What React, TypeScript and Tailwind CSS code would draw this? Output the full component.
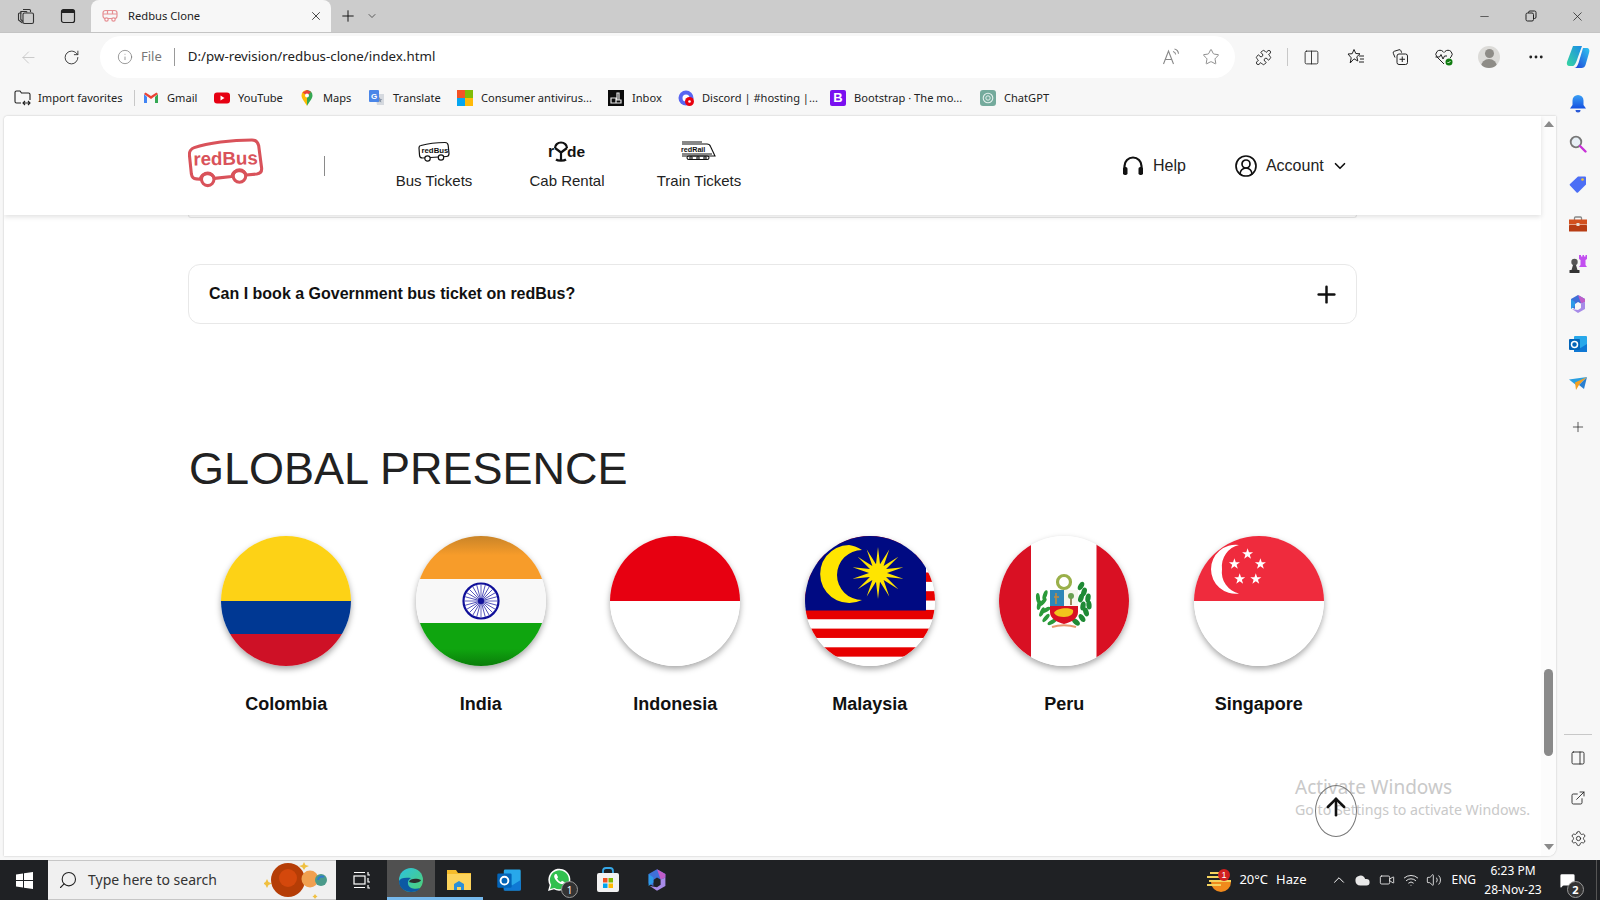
import {
  ArrowLeft, RotateCw, Info, Star, Puzzle, Columns2, Plus, ChevronDown, X, Minus, Ellipsis, Settings, ExternalLink,
  PanelRight, ChevronUp, Search, CircleUserRound, ArrowUp, Volume2, MessageSquare, Wifi, Video, Cloud,
} from 'lucide-react';
import type { ReactNode } from 'react';

const BOOKMARKS: { label: string; width: string; icon: ReactNode }[] = [
  { label: 'Gmail', width: 'w-[71px]', icon: <GmailIcon /> },
  { label: 'YouTube', width: 'w-[85px]', icon: <YoutubeIcon /> },
  { label: 'Maps', width: 'w-[70px]', icon: <MapsIcon /> },
  { label: 'Translate', width: 'w-[88px]', icon: <TranslateIcon /> },
  { label: 'Consumer antivirus...', width: 'w-[151px]', icon: <MsIcon /> },
  { label: 'Inbox', width: 'w-[70px]', icon: <InboxIcon /> },
  { label: 'Discord | #hosting |...', width: 'w-[152px]', icon: <DiscordIcon /> },
  { label: 'Bootstrap · The mo...', width: 'w-[150px]', icon: <BootstrapIcon /> },
  { label: 'ChatGPT', width: 'w-[80px]', icon: <ChatIcon /> },
];

const COUNTRIES: { name: string; flag: ReactNode }[] = [
  { name: 'Colombia', flag: <Colombia /> },
  { name: 'India', flag: <India /> },
  { name: 'Indonesia', flag: <Indonesia /> },
  { name: 'Malaysia', flag: <Malaysia /> },
  { name: 'Peru', flag: <Peru /> },
  { name: 'Singapore', flag: <Singapore /> },
];

function GmailIcon() {
  return (
    <svg width="16" height="16" viewBox="0 0 16 16">
      <path d="M1 4v9h3V7z" fill="#4285f4" />
      <path d="M15 4v9h-3V7z" fill="#34a853" />
      <path d="M1 4l7 5 7-5-1.500-1.500L8 6 2.500 2.500z" fill="#ea4335" />
    </svg>
  );
}
function YoutubeIcon() {
  return (
    <svg width="16" height="16" viewBox="0 0 16 16">
      <rect x="0" y="2.500" width="16" height="11" rx="3" fill="#e60012" />
      <path d="M6.500 5.500l4 2.500-4 2.500z" fill="#fff" />
    </svg>
  );
}
function MapsIcon() {
  return (
    <svg width="16" height="16" viewBox="0 0 16 16">
      <path d="M8 0a5.500 5.500 0 0 0-5.500 5.500C2.500 9 6 12 8 16z" fill="#fbbc04" />
      <path d="M8 0a5.500 5.500 0 0 1 5.500 5.500C13.500 9 10 12 8 16V8z" fill="#34a853" />
      <path d="M3.500 2.500L8 0l4 2-4 3.500z" fill="#ea4335" />
      <circle cx="8" cy="5.500" r="2" fill="#fff" />
    </svg>
  );
}
function TranslateIcon() {
  return (
    <svg width="16" height="16" viewBox="0 0 16 16">
      <path d="M6 4h9v11H8z" fill="#d5d9df" />
      <path d="M10.500 7l.9 2 2 .2-1.500 1.300.5 2-1.900-1.100-1.800 1.100.5-2-1.500-1.300 2-.2z" fill="#8a96a8" />
      <rect x="0" y="0" width="10" height="12" rx="1" fill="#4a86e8" />
      <text x="5" y="9" textAnchor="middle" fontSize="8" fontWeight="700" fill="#fff" fontFamily="Liberation Sans">G</text>
    </svg>
  );
}
function MsIcon() {
  return (
    <div className="grid h-4 w-4 grid-cols-2 grid-rows-2">
      <div className="bg-[#f35325]" />
      <div className="bg-[#81bc06]" />
      <div className="bg-[#05a6f0]" />
      <div className="bg-[#ffba08]" />
    </div>
  );
}
function InboxIcon() {
  return (
    <svg width="16" height="16" viewBox="0 0 16 16">
      <rect width="16" height="16" fill="#0b0b0b" />
      <path d="M3 8h5v5H3zM8 10h5v3H8zM9 3h2v7H9z" fill="none" stroke="#e8e8e8" strokeWidth="1.200" />
    </svg>
  );
}
function DiscordIcon() {
  return (
    <svg width="16" height="16" viewBox="0 0 16 16">
      <circle cx="8" cy="8" r="7.500" fill="#5865f2" />
      <circle cx="8" cy="8" r="3.500" fill="#fff" />
      <circle cx="11.500" cy="11.500" r="4.500" fill="#e8000f" />
      <circle cx="11.500" cy="11.500" r="1.300" fill="#fff" />
    </svg>
  );
}
function BootstrapIcon() {
  return (
    <div className="flex h-4 w-4 items-center justify-center rounded-[2px] bg-[#7a10f0] font-['Liberation_Sans',sans-serif] text-[13px] leading-none font-bold text-white">
      B
    </div>
  );
}
function ChatIcon() {
  return (
    <svg width="16" height="16" viewBox="0 0 16 16">
      <rect width="16" height="16" rx="3" fill="#74aa9c" />
      <circle cx="8" cy="8" r="4.800" fill="none" stroke="#e4f0ed" strokeWidth="1.100" />
      <circle cx="8" cy="8" r="2.200" fill="none" stroke="#e4f0ed" strokeWidth="1" />
    </svg>
  );
}

function BusFavicon() {
  return (
    <svg width="16" height="14" viewBox="0 0 16 14" fill="none" stroke="#e58f93" strokeWidth="1.200">
      <rect x="1" y="1.500" width="14" height="8" rx="2.500" />
      <path d="M1 5h14M5.500 1.500v4M10.500 1.500v4" />
      <circle cx="4.500" cy="10.500" r="1.700" fill="#fff" />
      <circle cx="11.500" cy="10.500" r="1.700" fill="#fff" />
    </svg>
  );
}

function WorkspacesIcon() {
  return (
    <svg width="18" height="18" viewBox="0 0 18 18" fill="none" stroke="#333" strokeWidth="1.100">
      <path d="M6 2.500h6.500a1 1 0 0 1 1 1V5M3.500 4.500H9a1 1 0 0 1 1 .8" />
      <path d="M1.500 7a1 1 0 0 1 1-1h2" />
      <rect x="6" y="6" width="10.500" height="10.500" rx="1.500" />
      <path d="M1.500 7v6l4 3M3.800 4.500v8l2.200 2" />
    </svg>
  );
}
function TabActionsIcon() {
  return (
    <svg width="16" height="16" viewBox="0 0 16 16">
      <rect x="1.500" y="1.500" width="13" height="13" rx="2" fill="none" stroke="#222" strokeWidth="1.200" />
      <path d="M1.500 3.500a2 2 0 0 1 2-2h9a2 2 0 0 1 2 2V5h-13z" fill="#222" />
    </svg>
  );
}
function RestoreIcon() {
  return (
    <svg width="12" height="12" viewBox="0 0 12 12" fill="none" stroke="#222" strokeWidth="1">
      <rect x="1" y="3" width="7.500" height="8" rx="1.500" />
      <path d="M3.500 3V2.500A1.500 1.500 0 0 1 5 1h4.500A1.500 1.500 0 0 1 11 2.500V7a1.500 1.500 0 0 1-1.500 1.500h-1" />
    </svg>
  );
}
function ReadAloudIcon() {
  return (
    <svg width="18" height="18" viewBox="0 0 18 18" fill="none" stroke="#888" strokeWidth="1.100">
      <path d="M1.500 16L6.500 3l5 13M3.300 11.500h6.400" />
      <path d="M11 3.500c1.500.3 2.500 1.500 2.700 3M12.500 1c2.300.5 3.800 2.300 4 4.700" />
    </svg>
  );
}
function FavoritesIcon() {
  return (
    <svg width="18" height="18" viewBox="0 0 18 18" fill="none" stroke="#222" strokeWidth="1">
      <path d="M7 1.500l1.800 4 4.200.3-3.200 3 1 4.200L7 10.800 3.200 15l1-5.200L1 6l4.200-.3z" />
      <path d="M12 8h5M13 11h4M12 14h5" />
    </svg>
  );
}
function CollectionsIcon() {
  return (
    <svg width="18" height="18" viewBox="0 0 18 18" fill="none" stroke="#222" strokeWidth="1">
      <path d="M4 9.500L2.300 5.300a1.500 1.500 0 0 1 .9-2L8 1.800a1.500 1.500 0 0 1 1.900.9l.7 2" />
      <rect x="6" y="6" width="10.500" height="10.500" rx="2" />
      <path d="M11.250 8.500v5.500M8.500 11.250H14" />
    </svg>
  );
}
function HeartBeatIcon() {
  return (
    <svg width="20" height="20" viewBox="0 0 20 20" fill="none" stroke="#222" strokeWidth="1">
      <path d="M10 17l-7-7a4 4 0 0 1 0-5.500 4.200 4.200 0 0 1 6 0l1 1 1-1a4.200 4.200 0 0 1 6 0 4 4 0 0 1 0 5.500l-1 1" />
      <path d="M1.500 10h4l1.500-2.500 2 4.500 1.500-3h2.500" />
      <circle cx="15" cy="15" r="3.500" fill="#107c10" stroke="none" />
      <path d="M13.500 15l1 1 2-2" stroke="#fff" strokeWidth="0.900" />
    </svg>
  );
}
function CopilotIcon() {
  return (
    <svg width="24" height="24" viewBox="0 0 24 24">
      <defs>
        <linearGradient id="cop-a" x1="0" y1="1" x2="1" y2="0">
          <stop offset="0" stopColor="#37d6a0" />
          <stop offset="1" stopColor="#1a8be8" />
        </linearGradient>
        <linearGradient id="cop-b" x1="0" y1="1" x2="1" y2="0">
          <stop offset="0" stopColor="#1f3fd8" />
          <stop offset="1" stopColor="#2fc6f0" />
        </linearGradient>
      </defs>
      <path d="M7 1h9l-4 11c-1 3-3 9-5 9H3.500C1 21 .5 19 1 17z" fill="url(#cop-a)" />
      <path d="M17 3h3.500C23 3 24 5 23 8l-3.500 12c-.6 2-2 3-4 3H8c2 0 3.500-2 4.500-5z" fill="url(#cop-b)" />
    </svg>
  );
}
function ChessIcon() {
  return (
    <svg width="20" height="20" viewBox="0 0 20 20">
      <circle cx="6.500" cy="8" r="3.200" fill="#555" />
      <path d="M5 11h3l1.500 5h-6z" fill="#444" />
      <rect x="1.500" y="16" width="10" height="3" rx="0.500" fill="#333" />
      <path d="M11 1h2v1.500h1.500V1h1.500v1.500h1.500V1H19v4l-1.500 1v5l1.500 2H11l1.500-2V6L11 5z" fill="#c24ff0" />
    </svg>
  );
}
function M365Icon({ size = 20 }: { size?: number }) {
  return (
    <svg width={size} height={size} viewBox="0 0 20 20">
      <path d="M10 1l7 4v3l-4 1.500-3-1.500-3 2v5l-4-2V5z" fill="#3f6fd8" />
      <path d="M10 1l7 4v3l-4 1.500z" fill="#c05cc9" />
      <path d="M17 8v7l-7 4-6-4 6 1 3-2V9.500z" fill="#a78be8" />
      <path d="M3 15V5l4 3v4z" fill="#2c9ae8" />
    </svg>
  );
}
function OutlookIcon({ size = 20 }: { size?: number }) {
  return (
    <svg width={size} height={size} viewBox="0 0 20 20">
      <rect x="6" y="2" width="13" height="16" rx="1" fill="#28a8ea" />
      <path d="M6 10l6.500 4L19 10v8H6z" fill="#0f78d4" />
      <rect x="1" y="5" width="11" height="11" rx="1" fill="#0364b8" />
      <circle cx="6.500" cy="10.500" r="3" fill="none" stroke="#fff" strokeWidth="1.500" />
    </svg>
  );
}
function PlaneIcon() {
  return (
    <svg width="20" height="16" viewBox="0 0 20 16">
      <path d="M1 3.500L19 1 8 9z" fill="#2a9fe0" />
      <path d="M19 1L7 6.500 8 14l3-5z" fill="#f4a020" />
      <path d="M11 9l5 4 3-12z" fill="#2a7fd0" />
    </svg>
  );
}
function SidebarTag() {
  return (
    <svg width="18" height="18" viewBox="0 0 18 18">
      <path d="M9 1.500h7a1 1 0 0 1 1 1v7L9 17.500a1 1 0 0 1-1.400 0L1 10.500a1 1 0 0 1 0-1.400z" fill="#4c6ef5" />
      <circle cx="13.500" cy="4.500" r="1.300" fill="#f4c430" />
    </svg>
  );
}
function ToolboxIcon() {
  return (
    <svg width="20" height="16" viewBox="0 0 20 16">
      <path d="M6.500 4V2a1 1 0 0 1 1-1h5a1 1 0 0 1 1 1v2" fill="none" stroke="#888" strokeWidth="1.300" />
      <rect x="1" y="3.500" width="18" height="5" fill="#d2501e" />
      <rect x="1" y="9" width="18" height="6.500" rx="0.500" fill="#b83d14" />
      <rect x="8.500" y="7" width="3" height="3" fill="#e8e0d8" />
    </svg>
  );
}
function BellIcon() {
  return (
    <svg width="16" height="18" viewBox="0 0 16 18">
      <defs>
        <linearGradient id="bell-a" x1="0" y1="0" x2="0" y2="1">
          <stop offset="0" stopColor="#3aa0f5" />
          <stop offset="1" stopColor="#1550e0" />
        </linearGradient>
      </defs>
      <path d="M8 0a5.500 5.500 0 0 0-5.500 5.500V10L0 13.500h16L13.500 10V5.500A5.500 5.500 0 0 0 8 0z" fill="url(#bell-a)" />
      <path d="M5.500 15h5a2.500 2.500 0 0 1-5 0z" fill="#2a5ad8" />
    </svg>
  );
}
function SidebarSearchIcon() {
  return (
    <svg width="18" height="18" viewBox="0 0 18 18">
      <circle cx="7" cy="7" r="5.300" fill="#e8f0f6" stroke="#777" strokeWidth="1.800" />
      <path d="M11 11l5.500 5.500" stroke="#c832d8" strokeWidth="2.400" strokeLinecap="round" />
    </svg>
  );
}

function RedbusLogo() {
  return (
    <svg width="76" height="50" viewBox="0 0 78 52" fill="none">
      <path
        d="M6 10C20 5 45 2 66 2c4 0 6 2 7 6l3 23c.5 4-1 6-5 6.500L60 38.500a8 8 0 0 0-15 1.500L27 42a8 8 0 0 0-15 1l-4-.5c-3 0-4.500-2-5-5L1 18c-.5-4 2-7 5-8z"
        stroke="#d9525a"
        strokeWidth="3.200"
        strokeLinejoin="round"
      />
      <circle cx="20" cy="43" r="6.500" stroke="#d9525a" strokeWidth="3.200" />
      <circle cx="53" cy="39.500" r="6.500" stroke="#d9525a" strokeWidth="3.200" />
      <text x="5" y="28" fontSize="19.500" fontWeight="700" fill="#d9525a" fontFamily="Liberation Sans" transform="rotate(-1 38 22)">
        redBus
      </text>
    </svg>
  );
}
function NavBusIcon() {
  return (
    <svg width="32" height="22" viewBox="0 0 32 22" fill="none" stroke="#111">
      <path d="M3 4.500C10 2.500 20 1.500 27 1.500c2 0 3 1 3.200 3l.8 8c0 2-.8 3-2.500 3l-24 1.500c-2 0-3-1-3-3L1 7c0-1.500 1-2.500 2-2.500z" strokeWidth="1.200" />
      <circle cx="9.500" cy="17.500" r="2.700" fill="#fff" strokeWidth="1.200" />
      <circle cx="23" cy="16.500" r="2.700" fill="#fff" strokeWidth="1.200" />
      <text x="3.500" y="11.500" fontSize="7.800" fontWeight="700" fill="#111" stroke="none" fontFamily="Liberation Sans">
        redBus
      </text>
    </svg>
  );
}
function NavRydeIcon() {
  return (
    <svg width="38" height="22" viewBox="0 0 38 22" fill="none">
      <text x="0" y="16" fontSize="16" fontWeight="700" fill="#111" fontFamily="Liberation Sans">r</text>
      <path d="M7 7a6 5.500 0 0 1 12 0" stroke="#111" strokeWidth="2.200" />
      <path d="M7 7l6 4.500 6-4.500M13 11.500V19" stroke="#111" strokeWidth="2.200" />
      <path d="M8 18.500c2 1.500 8 1.500 10 0" stroke="#111" strokeWidth="2.200" />
      <text x="19" y="16" fontSize="15.500" fontWeight="700" fill="#111" fontFamily="Liberation Sans">de</text>
    </svg>
  );
}
function NavRailIcon() {
  return (
    <svg width="36" height="22" viewBox="0 0 36 22" fill="none" stroke="#111" strokeWidth="1.100">
      <path d="M1 3h25c2 0 3 1 3.500 2.500L34 15H1" />
      <path d="M1 1h20M1 13h30" />
      <rect x="6" y="15" width="22" height="3.500" rx="1.700" />
      <circle cx="10" cy="17" r="1.200" />
      <circle cx="17" cy="17" r="1.200" />
      <circle cx="24" cy="17" r="1.200" />
      <text x="0" y="10.500" fontSize="7.200" fontWeight="700" fill="#111" stroke="none" fontFamily="Liberation Sans">
        redRail
      </text>
    </svg>
  );
}
function HeadsetIcon() {
  return (
    <svg width="22" height="20" viewBox="0 0 22 20" fill="none">
      <path d="M2.500 13V10a8.500 8.500 0 0 1 17 0v3" stroke="#111" strokeWidth="2.200" />
      <rect x="1" y="11" width="4.500" height="8" rx="1.800" fill="#111" />
      <rect x="16.500" y="11" width="4.500" height="8" rx="1.800" fill="#111" />
    </svg>
  );
}

function Colombia() {
  return (
    <svg width="130" height="130" viewBox="0 0 130 130">
      <rect width="130" height="65" fill="#fdd216" />
      <rect y="65" width="130" height="33" fill="#003893" />
      <rect y="98" width="130" height="32" fill="#ce1126" />
    </svg>
  );
}
function India() {
  const spokes = Array.from({ length: 24 }, (_, i) => (i * 360) / 24);
  return (
    <svg width="130" height="130" viewBox="0 0 130 130">
      <defs>
        <linearGradient id="in-top" x1="0" y1="0" x2="0" y2="1">
          <stop offset="0" stopColor="#c98428" />
          <stop offset="0.45" stopColor="#f79c2a" />
        </linearGradient>
        <linearGradient id="in-bot" x1="0" y1="0" x2="0" y2="1">
          <stop offset="0.6" stopColor="#0fa50f" />
          <stop offset="1" stopColor="#0a7d0a" />
        </linearGradient>
      </defs>
      <rect width="130" height="43" fill="url(#in-top)" />
      <rect y="43" width="130" height="44" fill="#f8f8f8" />
      <rect y="87" width="130" height="43" fill="url(#in-bot)" />
      <circle cx="65" cy="65" r="17.500" fill="#fff" stroke="#10109a" strokeWidth="2.200" />
      {spokes.map((a) => (
        <line key={a} x1="65" y1="65" x2="65" y2="48.500" stroke="#3a3ab0" strokeWidth="0.800" transform={`rotate(${a} 65 65)`} />
      ))}
      <circle cx="65" cy="65" r="3" fill="#10109a" />
    </svg>
  );
}
function Indonesia() {
  return (
    <svg width="130" height="130" viewBox="0 0 130 130">
      <rect width="130" height="65" fill="#e70011" />
      <rect y="65" width="130" height="65" fill="#fff" />
    </svg>
  );
}
function starPoints(cx: number, cy: number, outer: number, inner: number, n: number) {
  const pts: string[] = [];
  for (let i = 0; i < n * 2; i++) {
    const r = i % 2 === 0 ? outer : inner;
    const a = (Math.PI * i) / n - Math.PI / 2;
    pts.push(`${(cx + r * Math.cos(a)).toFixed(2)},${(cy + r * Math.sin(a)).toFixed(2)}`);
  }
  return pts.join(' ');
}
function Malaysia() {
  const stripes = Array.from({ length: 7 }, (_, i) => 130 - 9.35 * (2 * i + 2));
  return (
    <svg width="130" height="130" viewBox="0 0 130 130">
      <rect width="130" height="130" fill="#fff" />
      {stripes.map((y) => (
        <rect key={y} y={y} width="130" height="9.350" fill="#e70000" />
      ))}
      <rect width="121" height="74.500" fill="#000a82" />
      <path fillRule="evenodd" d="M44 9a29 29 0 1 0 13 55 25 25 0 1 1 0-50A29 29 0 0 0 44 9z" fill="#ffe500" />
      <polygon points={starPoints(73, 37, 26, 9, 14)} fill="#ffe500" />
    </svg>
  );
}
function Peru() {
  const leftLeaves: [number, number, number][] = [
    [53, 86, 60], [47, 82, 40], [43, 76, 25], [40, 69, 10], [39, 62, -5], [47, 74, 60], [44, 66, 40], [46, 59, 20],
  ];
  const rightLeaves: [number, number, number][] = [
    [77, 86, -50], [83, 82, -35], [87, 76, -20], [90, 69, -5], [89, 62, 10], [85, 56, 20], [82, 50, 30], [84, 70, 10], [82, 62, 20],
  ];
  return (
    <svg width="130" height="130" viewBox="0 0 130 130">
      <rect width="130" height="130" fill="#fff" />
      <rect width="32" height="130" fill="#d91023" />
      <rect x="97.500" width="32.500" height="130" fill="#d91023" />
      <circle cx="65" cy="46" r="6.500" fill="#fff" stroke="#9ab04a" strokeWidth="3.200" />
      {leftLeaves.map(([x, y, r]) => (
        <ellipse key={`${x}-${y}`} cx={x} cy={y} rx="2" ry="5" fill="#2a9a3a" transform={`rotate(${r} ${x} ${y})`} />
      ))}
      {rightLeaves.map(([x, y, r]) => (
        <ellipse key={`${x}-${y}`} cx={x} cy={y} rx="2.600" ry="4.500" fill="#1f8a35" transform={`rotate(${r} ${x} ${y})`} />
      ))}
      <path d="M51 54h14v16H51z" fill="#2f86b8" />
      <path d="M65 54h14v16H65z" fill="#f6f6ee" />
      <path d="M57 57v11M55 61h5" stroke="#c88a3a" strokeWidth="1.500" />
      <path d="M72 58v11" stroke="#7a6a30" strokeWidth="1.500" />
      <circle cx="72" cy="60" r="3" fill="#6aa050" />
      <path d="M51 70h28v6c0 7-7 10-14 12-7-2-14-5-14-12z" fill="#d91023" />
      <path d="M55 77c2-5 15-6 19-3 1 4-3 7-9 7-4 0-8-1-10-4z" fill="#f2c41c" />
      <path d="M53 91c7-2.500 17-2.500 24 0" stroke="#e89a70" strokeWidth="2" fill="none" />
    </svg>
  );
}
function Singapore() {
  const stars: [number, number][] = [
    [53.6, 18],
    [40.4, 28],
    [66.4, 28],
    [45.7, 43],
    [61.8, 43],
  ];
  return (
    <svg width="130" height="130" viewBox="0 0 130 130">
      <rect width="130" height="65" fill="#ef2b3d" />
      <rect y="65" width="130" height="65" fill="#fff" />
      <path d="M45 9a24.500 24.500 0 1 0 0 48.500A22 22 0 0 1 28 33 22 22 0 0 1 45 9z" fill="#fff" />
      {stars.map(([x, y]) => (
        <polygon key={x} points={starPoints(x, y, 5.8, 2.3, 5)} fill="#fff" />
      ))}
    </svg>
  );
}

function EdgeIcon() {
  return (
    <svg width="26" height="26" viewBox="0 0 26 26">
      <defs>
        <linearGradient id="edge-a" x1="0" y1="0" x2="1" y2="1">
          <stop offset="0" stopColor="#2cc3e0" />
          <stop offset="1" stopColor="#50d070" />
        </linearGradient>
      </defs>
      <circle cx="13" cy="13" r="12" fill="url(#edge-a)" />
      <path d="M1 14c0 7 6 11 12 11 4 0 7-1 9-4-4 1.500-11 1-12-4-.6-3 1-5 3-6-6-1-11 0-12 3z" fill="#0c59a4" />
      <path d="M11 15c1-4 8-4 12-2-.5 2-4 3-7 3-3 0-4-1-5-1z" fill="#2d2d2d" />
    </svg>
  );
}
function ExplorerIcon() {
  return (
    <svg width="26" height="24" viewBox="0 0 26 24">
      <path d="M1 2h9l2 3h13v17H1z" fill="#f5bc2c" />
      <rect x="1" y="6" width="24" height="16" fill="#fcd35c" />
      <path d="M8 22v-6l5-3 5 3v6h-3v-3h-4v3z" fill="#2a8fd8" />
    </svg>
  );
}
function WhatsappIcon() {
  return (
    <svg width="26" height="26" viewBox="0 0 26 26">
      <path d="M2 24l1.700-6A11 11 0 1 1 8 22.300z" fill="#fff" />
      <path d="M4 22l1.200-4.300A9.500 9.500 0 1 1 8.500 21z" fill="#31c04f" />
      <path d="M9.500 7c-1 .5-1.800 2-1 4 1 2.500 3.500 5 6.500 6 2 .5 3.500-.5 3.800-1.800l-2.800-1.500-1.200 1.300c-1.500-.5-3-2-3.700-3.500l1-1.300L10.500 7z" fill="#fff" />
    </svg>
  );
}
function StoreIcon() {
  return (
    <svg width="24" height="26" viewBox="0 0 24 26">
      <path d="M7 7V4a3 3 0 0 1 3-3h4a3 3 0 0 1 3 3v3" fill="none" stroke="#36a8e8" strokeWidth="1.800" />
      <rect x="1" y="6" width="22" height="19" rx="2" fill="#f2f2f2" />
      <rect x="7" y="11" width="4.500" height="4.500" fill="#f25022" />
      <rect x="12.500" y="11" width="4.500" height="4.500" fill="#7fba00" />
      <rect x="7" y="16.500" width="4.500" height="4.500" fill="#00a4ef" />
      <rect x="12.500" y="16.500" width="4.500" height="4.500" fill="#ffb900" />
    </svg>
  );
}
function Planets() {
  return (
    <svg width="72" height="38" viewBox="0 0 72 38">
      <path d="M3 6l1.500 3L8 10.500 4.500 12 3 15l-1.500-3L-1 10.500 1.500 9z" fill="#f0c040" transform="translate(0 12)" />
      <path d="M40 1l1.500 3L45 5l-3.500 1.500L40 9l-1.500-2.500L35 5l3.500-1z" fill="#f0c040" />
      <circle cx="24" cy="19" r="17" fill="#b53d06" />
      <circle cx="24" cy="17" r="9" fill="#d4480c" />
      <circle cx="46" cy="18" r="8.500" fill="#f0a050" />
      <circle cx="57" cy="19" r="6" fill="#4a9a8a" />
      <path d="M54 19a4 4 0 0 1 6-3" stroke="#2f7ad0" strokeWidth="2" fill="none" />
      <path d="M51 33l1 1.500 1.500 1-1.500 1-1 1.500-1-1.500-1.500-1 1.500-1z" fill="#f0c040" />
    </svg>
  );
}
function WeatherIcon() {
  return (
    <svg width="26" height="24" viewBox="0 0 26 24">
      <path d="M5 14a10 10 0 0 0 20 0z" fill="#f08a1c" />
      <path d="M4 5h11M1 9h15M3 13h22M1 17h14" stroke="#f4d35e" strokeWidth="2" />
      <circle cx="18" cy="7" r="6" fill="#d02020" />
      <text x="18" y="10" textAnchor="middle" fontSize="9" fill="#fff" fontFamily="Liberation Sans">1</text>
    </svg>
  );
}
function TaskViewIcon() {
  return (
    <svg width="18" height="18" viewBox="0 0 18 18" fill="none" stroke="#fff" strokeWidth="1.200">
      <rect x="1" y="5" width="11" height="8" />
      <path d="M1 1.500h11M1 16.500h11M15 1v3h2M15 7v4h2M15 14v3h2" />
    </svg>
  );
}

function ToolbarSlot({ className, children }: { className: string; children: ReactNode }) {
  return <div className={`flex shrink-0 items-center justify-center ${className}`}>{children}</div>;
}

export default function App() {
  return (
    <div className="relative flex h-[900px] w-[1600px] flex-col overflow-hidden bg-[#f7f7f7] font-['Liberation_Sans',sans-serif]">
      {/* tab strip */}
      <div className="flex h-8 shrink-0 items-center bg-[#cccccc] font-['Noto_Sans',sans-serif]">
        <ToolbarSlot className="ml-[8px] w-9"><WorkspacesIcon /></ToolbarSlot>
        <ToolbarSlot className="ml-[6px] w-9"><TabActionsIcon /></ToolbarSlot>
        <div className="ml-[5px] flex h-8 w-[240px] items-center rounded-t-lg bg-[#f7f7f7] pr-[8px] pl-[11px]">
          <BusFavicon />
          <span className="ml-[10px] flex-1 text-[11.2px] text-[#222]">Redbus Clone</span>
          <X size={14} strokeWidth={1.4} className="text-[#222]" />
        </div>
        <ToolbarSlot className="ml-[6px] w-[22px]"><Plus size={18} strokeWidth={1.3} className="text-[#111]" /></ToolbarSlot>
        <ToolbarSlot className="ml-[4px] w-[18px]"><ChevronDown size={12} strokeWidth={1.5} className="text-[#333]" /></ToolbarSlot>
        <div className="ml-auto flex">
          <ToolbarSlot className="mr-[1px] w-[46px]"><Minus size={13} strokeWidth={1.2} className="text-[#222]" /></ToolbarSlot>
          <ToolbarSlot className="w-[46px]"><RestoreIcon /></ToolbarSlot>
          <ToolbarSlot className="w-[46px]"><X size={15} strokeWidth={1.2} className="text-[#222]" /></ToolbarSlot>
        </div>
      </div>

      {/* address row */}
      <div className="flex h-[50px] shrink-0 items-center border-t border-[#c4c4c4] pb-[1px] font-['Noto_Sans',sans-serif]">
        <ToolbarSlot className="ml-[10px] w-9"><ArrowLeft size={19} strokeWidth={1.1} className="text-[#c4c4c4]" /></ToolbarSlot>
        <ToolbarSlot className="ml-[7px] w-9"><RotateCw size={17} strokeWidth={1.3} className="text-[#333]" /></ToolbarSlot>
        <div className="ml-[11px] flex h-[42px] w-[1135px] items-center rounded-full bg-white pr-[15px] pl-[17px]">
          <Info size={16} strokeWidth={1.1} className="text-[#777]" />
          <span className="ml-[8px] text-[13px] text-[#777]">File</span>
          <div className="ml-[12px] h-[18px] w-px bg-[#999]" />
          <span className="ml-[13px] flex-1 text-[13.3px] text-[#222]">D:/pw-revision/redbus-clone/index.html</span>
          <ReadAloudIcon />
          <Star size={18} strokeWidth={1.1} className="ml-[22px] text-[#777]" />
        </div>
        <ToolbarSlot className="ml-[14px] w-7"><Puzzle size={17} strokeWidth={1.3} className="text-[#222]" /></ToolbarSlot>
        <div className="ml-[10px] h-[18px] w-px bg-[#c8c8c8]" />
        <ToolbarSlot className="ml-[9px] w-7"><Columns2 size={17} strokeWidth={1.2} className="text-[#222]" /></ToolbarSlot>
        <ToolbarSlot className="ml-[17px] w-7"><FavoritesIcon /></ToolbarSlot>
        <ToolbarSlot className="ml-[16px] w-7"><CollectionsIcon /></ToolbarSlot>
        <ToolbarSlot className="ml-[16px] w-7"><HeartBeatIcon /></ToolbarSlot>
        <ToolbarSlot className="ml-[17px] w-7">
          <div className="flex h-[22px] w-[22px] flex-col items-center overflow-hidden rounded-full bg-[#dcdbd8]">
            <div className="mt-[3px] h-[9px] w-[9px] rounded-full bg-[#8e8c87]" />
            <div className="mt-[1px] h-[10px] w-[16px] rounded-t-full bg-[#8e8c87]" />
          </div>
        </ToolbarSlot>
        <ToolbarSlot className="ml-[19px] w-7"><Ellipsis size={18} strokeWidth={1.8} className="text-[#222]" /></ToolbarSlot>
        <ToolbarSlot className="ml-[14px] w-7"><CopilotIcon /></ToolbarSlot>
      </div>

      {/* everything below the toolbar */}
      <div className="flex min-h-0 flex-1">
        <div className="flex min-w-0 flex-1 flex-col">
          <div className="flex h-[34px] shrink-0 items-center pb-[2px] pl-[14px] font-['Noto_Sans',sans-serif] text-[11.1px] text-[#222]">
            <div className="flex w-[112px] items-center">
              <svg width="17" height="16" viewBox="0 0 17 16" fill="none" stroke="#222" strokeWidth="1.100">
                <path d="M7 13H2.500a1.500 1.500 0 0 1-1.500-1.500V2.500A1.500 1.500 0 0 1 2.500 1H6l1.500 2h7A1.500 1.500 0 0 1 16 4.500V10" />
                <path d="M9 13h7M11 11l-2 2 2 2M14 11l2 2-2 2" />
              </svg>
              <span className="ml-[7px] whitespace-nowrap">Import favorites</span>
            </div>
            <div className="mr-[8px] ml-[8px] h-[16px] w-px bg-[#c8c8c8]" />
            {BOOKMARKS.map(({ label, width, icon }) => (
              <div key={label} className={`flex shrink-0 items-center gap-[8px] ${width}`}>
                {icon}
                <span className="whitespace-nowrap">{label}</span>
              </div>
            ))}
          </div>

          {/* page */}
          <div className="mb-1 ml-1 flex min-h-0 flex-1 overflow-hidden rounded-br-lg rounded-tl-sm bg-white shadow-[0_0_2px_rgba(0,0,0,0.25)]">
            <div className="min-w-0 flex-1">
              <header className="relative z-10 flex h-[99px] items-center bg-white pl-[184px] shadow-[0_2px_5px_rgba(0,0,0,0.12)]">
                <div className="-mt-[5px]"><RedbusLogo /></div>
                <div className="ml-[60px] h-[20px] w-px bg-[#8a8a8a]" />
                <nav className="mt-[2px] ml-[71px] flex">
                  <div className="flex w-[76px] flex-col items-center gap-[7px] text-[15px] whitespace-nowrap text-[#222]">
                    <NavBusIcon />
                    <span className="leading-[22px]">Bus Tickets</span>
                  </div>
                  <div className="ml-[57px] flex w-[76px] flex-col items-center gap-[7px] text-[15px] whitespace-nowrap text-[#222]">
                    <NavRydeIcon />
                    <span className="leading-[22px]">Cab Rental</span>
                  </div>
                  <div className="ml-[56px] flex w-[76px] flex-col items-center gap-[7px] text-[15px] whitespace-nowrap text-[#222]">
                    <NavRailIcon />
                    <span className="leading-[22px]">Train Tickets</span>
                  </div>
                </nav>
                <div className="ml-[385px] flex items-center text-base text-[#222]">
                  <HeadsetIcon />
                  <span className="ml-[9px]">Help</span>
                  <CircleUserRound size={24} strokeWidth={1.7} className="ml-[48px] text-[#111]" />
                  <span className="ml-[8px]">Account</span>
                  <ChevronDown size={18} strokeWidth={2.2} className="ml-[7px] text-[#111]" />
                </div>
              </header>

              <div className="mx-[184px] h-[3px] rounded-b-xl border border-t-0 border-[#e8e8e8]" />

              <div className="mx-[184px] mt-[46px] flex h-[60px] items-center justify-between rounded-xl border border-[#e8e8e8] pr-[16px] pl-[20px]">
                <span className="text-base font-bold text-[#111]">Can I book a Government bus ticket on redBus?</span>
                <Plus size={27} strokeWidth={2.2} className="mt-[1px] text-[#111]" />
              </div>

              <h2 className="mx-[184px] mt-[116px] h-[58px] pl-[1px] text-[45px] leading-[58px] font-normal text-[#212121]">GLOBAL PRESENCE</h2>

              <div className="mx-[185px] mt-[38px] grid grid-cols-6">
                {COUNTRIES.map(({ name, flag }) => (
                  <div key={name} className="flex flex-col items-center">
                    <div className="h-[130px] w-[130px] overflow-hidden rounded-full shadow-[0_3px_6px_rgba(0,0,0,0.35)]">{flag}</div>
                    <div className="mt-[27px] text-lg leading-[22px] font-bold text-[#111]">{name}</div>
                  </div>
                ))}
              </div>
            </div>

            {/* scrollbar */}
            <div className="flex w-[15px] shrink-0 flex-col items-center bg-[#fcfcfc] pt-[5px] pb-[6px]">
              <div className="h-0 w-0 border-x-[5px] border-b-[6px] border-x-transparent border-b-[#8a8a8a]" />
              <div className="mt-[542px] h-[87px] w-[9px] rounded-full bg-[#8a8a8a]" />
              <div className="mt-auto h-0 w-0 border-x-[5px] border-t-[6px] border-x-transparent border-t-[#8a8a8a]" />
            </div>
          </div>
        </div>

        {/* edge sidebar */}
        <aside className="flex w-[44px] shrink-0 flex-col items-center pt-[2px] pb-[2px]">
          <ToolbarSlot className="h-10 w-full"><BellIcon /></ToolbarSlot>
          <ToolbarSlot className="h-10 w-full"><SidebarSearchIcon /></ToolbarSlot>
          <ToolbarSlot className="h-10 w-full"><SidebarTag /></ToolbarSlot>
          <ToolbarSlot className="h-10 w-full"><ToolboxIcon /></ToolbarSlot>
          <ToolbarSlot className="h-10 w-full"><ChessIcon /></ToolbarSlot>
          <ToolbarSlot className="h-10 w-full"><M365Icon /></ToolbarSlot>
          <ToolbarSlot className="h-10 w-full"><OutlookIcon /></ToolbarSlot>
          <ToolbarSlot className="h-10 w-full"><PlaneIcon /></ToolbarSlot>
          <ToolbarSlot className="mt-[3px] h-10 w-full"><Plus size={16} strokeWidth={1.1} className="text-[#222]" /></ToolbarSlot>
          <div className="mt-auto mb-[3px] h-px w-[28px] bg-[#c8c8c8]" />
          <ToolbarSlot className="h-10 w-full"><PanelRight size={16} strokeWidth={1.3} className="text-[#222]" /></ToolbarSlot>
          <ToolbarSlot className="h-10 w-full"><ExternalLink size={16} strokeWidth={1.3} className="text-[#222]" /></ToolbarSlot>
          <ToolbarSlot className="h-10 w-full"><Settings size={17} strokeWidth={1.2} className="text-[#222]" /></ToolbarSlot>
        </aside>
      </div>

      {/* taskbar */}
      <div className="flex h-10 shrink-0 items-center bg-[#1f2124] font-['Noto_Sans',sans-serif] text-white">
        <ToolbarSlot className="w-[48px]">
          <svg width="17" height="17" viewBox="0 0 17 17" fill="#fff">
            <path d="M0 2.400L7 1.400V8H0zM8 1.200L17 0v8H8zM0 9h7v6.600L0 14.600zM8 9h9v8l-9-1.200z" />
          </svg>
        </ToolbarSlot>
        <div className="flex h-10 w-[288px] items-center border-y border-[#c6c6c6] bg-[#f0f0f0] pl-[10px]">
          <Search size={20} strokeWidth={1.3} className="-scale-x-100 text-[#222]" />
          <span className="ml-[10px] flex-1 text-sm text-[#333]">Type here to search</span>
          <Planets />
        </div>
        <ToolbarSlot className="w-[51px]"><TaskViewIcon /></ToolbarSlot>
        <ToolbarSlot className="h-10 w-[48px] border-b-[3px] border-[#76b9ed] bg-[#505050] pt-[2px]"><EdgeIcon /></ToolbarSlot>
        <ToolbarSlot className="h-10 w-[48px] border-b-[3px] border-[#76b9ed] pt-[2px]"><ExplorerIcon /></ToolbarSlot>
        <ToolbarSlot className="ml-[2px] w-[48px]"><OutlookIcon size={26} /></ToolbarSlot>
        <ToolbarSlot className="relative ml-[1px] w-[49px]">
          <WhatsappIcon />
          <span className="absolute right-[5px] bottom-[-5px] flex h-[17px] w-[17px] items-center justify-center rounded-full border border-[#999] bg-[#333] text-[10px] leading-none">1</span>
        </ToolbarSlot>
        <ToolbarSlot className="w-[49px]"><StoreIcon /></ToolbarSlot>
        <ToolbarSlot className="w-[49px]"><M365Icon size={24} /></ToolbarSlot>

        <div className="ml-auto flex items-center">
          <WeatherIcon />
          <span className="ml-[7px] text-[13px] whitespace-nowrap">20°C</span>
          <span className="ml-[8px] text-[13px]">Haze</span>
          <ToolbarSlot className="ml-[23px] w-[20px]"><ChevronUp size={18} strokeWidth={1.3} /></ToolbarSlot>
          <ToolbarSlot className="ml-[3px] w-[20px]"><Cloud size={17} fill="#e8e8e8" strokeWidth={0} /></ToolbarSlot>
          <ToolbarSlot className="ml-[5px] w-[20px]"><Video size={16} strokeWidth={1.2} /></ToolbarSlot>
          <ToolbarSlot className="ml-[4px] w-[20px]"><Wifi size={16} strokeWidth={1.3} /></ToolbarSlot>
          <ToolbarSlot className="ml-[3px] w-[20px]"><Volume2 size={16} strokeWidth={1.2} /></ToolbarSlot>
          <span className="ml-[7px] text-xs">ENG</span>
          <div className="ml-[7px] flex w-[60px] flex-col items-center text-xs leading-[19px] whitespace-nowrap">
            <span>6:23 PM</span>
            <span>28-Nov-23</span>
          </div>
          <div className="relative ml-[4px] flex h-10 w-[40px] items-center justify-center">
            <MessageSquare size={17} fill="#fff" strokeWidth={0} />
            <span className="absolute right-[3px] bottom-[2px] flex h-[17px] w-[17px] items-center justify-center rounded-full border border-[#999] bg-[#333] text-[11px] leading-none font-bold">2</span>
          </div>
          <div className="ml-[9px] h-10 w-px bg-[#555]" />
          <div className="w-[3px]" />
        </div>
      </div>

      {/* windows watermark, sits on top of the page */}
      <div className="pointer-events-none absolute top-[775px] left-[1295px] z-20 font-['Noto_Sans',sans-serif] text-[#c9c9c9]">
        <div className="text-[19px] leading-[24px] whitespace-nowrap">Activate Windows</div>
        <div className="mt-[1px] text-[14.2px] leading-[20px] whitespace-nowrap">Go to Settings to activate Windows.</div>
      </div>

      {/* back to top button */}
      <div className="absolute top-[785px] left-[1315px] z-30 flex h-[52px] w-[42px] items-center justify-center rounded-[50%] border border-[#777]">
        <ArrowUp size={28} strokeWidth={2.2} className="-mt-[9px] text-[#111]" />
      </div>
    </div>
  );
}
